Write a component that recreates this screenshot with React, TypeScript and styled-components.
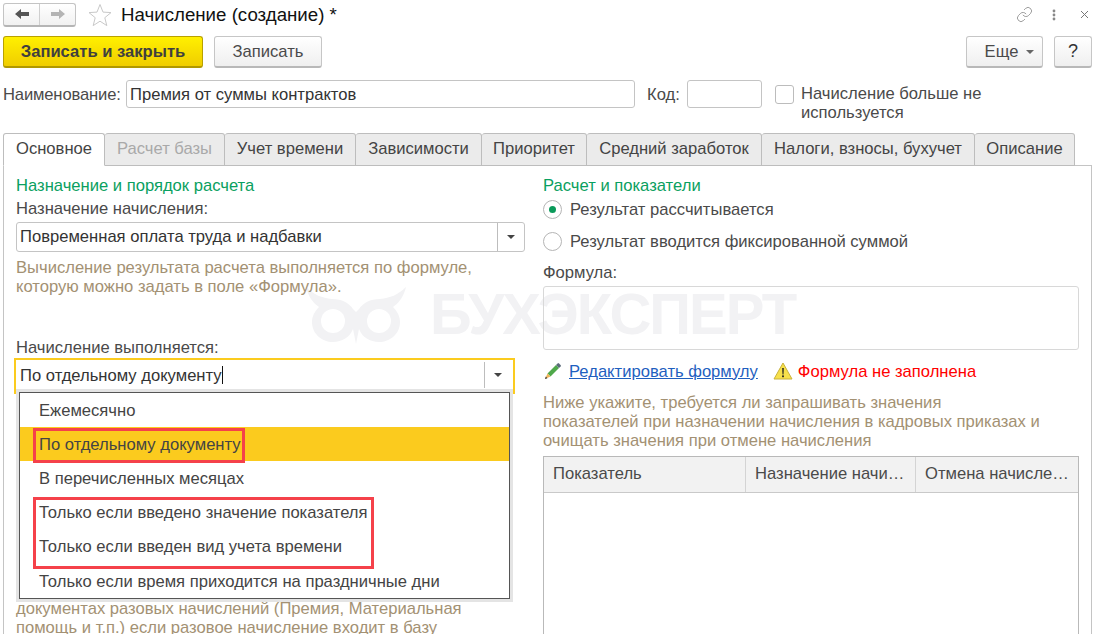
import React from "react";
import styled, { createGlobalStyle } from "styled-components";
import { Link } from "lucide-react";

const GlobalStyle = createGlobalStyle`
  html, body {
    margin: 0;
    padding: 0;
    background: #fff;
  }
  body {
    font-family: "Liberation Sans", Arial, sans-serif;
    font-size: 16.6px;
    color: #4a4a4a;
  }
`;

const tabs = [
  { label: "Основное", width: 102, active: true },
  { label: "Расчет базы", width: 120, disabled: true },
  { label: "Учет времени", width: 131 },
  { label: "Зависимости", width: 126 },
  { label: "Приоритет", width: 105 },
  { label: "Средний заработок", width: 175 },
  { label: "Налоги, взносы, бухучет", width: 213 },
  { label: "Описание", width: 100 },
];

const options = [
  "Ежемесячно",
  "По отдельному документу",
  "В перечисленных месяцах",
  "Только если введено значение показателя",
  "Только если введен вид учета времени",
  "Только если время приходится на праздничные дни",
];

export default function App() {
  return (
    <Page>
      <GlobalStyle />

      <TitleBar>
        <NavGroup>
          <NavButton>
            <svg width="16" height="12" viewBox="0 0 16 12">
              <path d="M1 6l6-5v3h8v4H7v3z" fill="#555" />
            </svg>
          </NavButton>
          <NavButton>
            <svg width="16" height="12" viewBox="0 0 16 12">
              <path d="M15 6L9 1v3H1v4h8v3z" fill="#b4b4b4" />
            </svg>
          </NavButton>
        </NavGroup>
        <StarIcon width="24" height="24" viewBox="0 0 24 24">
          <path
            d="M12 1.500l3 7.600 8 .5-6.200 5.100 2 7.900L12 18.200l-6.800 4.400 2-7.900L1 9.600l8-.5z"
            fill="none"
            stroke="#c9c9c9"
          />
        </StarIcon>
        <Title>Начисление (создание) *</Title>
        <WindowIcons>
          <Link size={17} strokeWidth={1} color="#777" />
          <svg width="4" height="12" viewBox="0 0 4 12">
            <circle cx="2" cy="2" r="1.400" fill="#888" />
            <circle cx="2" cy="6" r="1.400" fill="#888" />
            <circle cx="2" cy="10" r="1.400" fill="#888" />
          </svg>
          <svg width="9" height="9" viewBox="0 0 9 9">
            <path d="M1 1l7 7M8 1L1 8" stroke="#777" fill="none" />
          </svg>
        </WindowIcons>
      </TitleBar>

      <Toolbar>
        <PrimaryButton>Записать и закрыть</PrimaryButton>
        <Button $width={108}>Записать</Button>
        <PushRight />
        <MoreButton $width={77}>
          Еще <Caret />
        </MoreButton>
        <HelpButton $width={38}>?</HelpButton>
      </Toolbar>

      <NameRow>
        <FieldLabel>Наименование:</FieldLabel>
        <Input $width={509}>Премия от суммы контрактов</Input>
        <CodeLabel>Код:</CodeLabel>
        <Input $width={75} />
        <CheckBox />
        <CheckLabel>Начисление больше не используется</CheckLabel>
      </NameRow>

      <TabStrip>
        {tabs.map((t) => (
          <Tab key={t.label} $width={t.width} $active={t.active} $disabled={t.disabled}>
            {t.label}
          </Tab>
        ))}
      </TabStrip>

      <Panel>
        <Watermark>
          <svg width="104" height="62" viewBox="0 0 104 62">
            <path
              d="M2 4c8 8 16 11 26 12 10 0 17 4 21 10l3 3 3-3c4-6 11-10 21-10 10-1 18-4 26-12-2 9-7 16-13 20 5 5 7 10 7 15 0 12-10 20-21 20-9 0-17-5-20-13l-3 15-3-15c-3 8-11 13-20 13C18 59 8 51 8 39c0-5 2-10 7-15C9 20 4 13 2 4z"
              fill="#f2f2f4"
            />
            <circle cx="29" cy="38" r="12" fill="#fff" />
            <circle cx="75" cy="38" r="12" fill="#fff" />
          </svg>
          <WatermarkText>БУХЭКСПЕРТ</WatermarkText>
        </Watermark>

        <LeftColumn>
          <SectionTitle>Назначение и порядок расчета</SectionTitle>
          <Label>Назначение начисления:</Label>
          <Combo>
            <ComboValue>Повременная оплата труда и надбавки</ComboValue>
            <ComboArrow>
              <Caret $dark />
            </ComboArrow>
          </Combo>
          <Hint>
            Вычисление результата расчета выполняется по формуле,
            <br />
            которую можно задать в поле «Формула».
          </Hint>

          <SecondLabel>Начисление выполняется:</SecondLabel>
          <FocusWrap>
            <FocusCombo>
              <ComboValue>
                По отдельному документу
                <TextCursor />
              </ComboValue>
              <ComboArrow>
                <Caret $dark />
              </ComboArrow>
            </FocusCombo>
            <Popup>
              {options.map((o, i) => (
                <Option key={o} $selected={i === 1}>
                  {o}
                </Option>
              ))}
              <RedMark $top={35} $width={212} $height={35} />
              <RedMark $top={104} $width={341} $height={72} />
            </Popup>
          </FocusWrap>
          <BottomHint>
            документах разовых начислений (Премия, Материальная
            <br />
            помощь и т.п.) если разовое начисление входит в базу
          </BottomHint>
        </LeftColumn>

        <RightColumn>
          <SectionTitle>Расчет и показатели</SectionTitle>
          <RadioRow>
            <Radio $checked />
            Результат рассчитывается
          </RadioRow>
          <RadioRow>
            <Radio />
            Результат вводится фиксированной суммой
          </RadioRow>
          <FormulaLabel>Формула:</FormulaLabel>
          <FormulaBox />
          <LinkRow>
            <svg width="19" height="19" viewBox="0 0 19 19">
              <path d="M4.500 11.500L13 3l3 3-8.500 8.500z" fill="#4fa84a" />
              <path d="M13 3l1.600-1.600a1 1 0 0 1 1.400 0l1.600 1.600a1 1 0 0 1 0 1.400L16 6z" fill="#5c6b7a" />
              <path d="M4.500 11.500l3 3L2 17z" fill="#f0b45a" />
              <path d="M2 17l.8-2.400 1.600 1.600z" fill="#333" />
            </svg>
            <EditLink>Редактировать формулу</EditLink>
            <svg width="20" height="18" viewBox="0 0 20 18">
              <path d="M10 1l9 16H1z" fill="#f7e04b" stroke="#c9b23c" strokeLinejoin="round" />
              <path d="M9.200 6h1.600l-.3 6.500h-1z" fill="#222" />
              <rect x="9.100" y="13.400" width="1.800" height="1.800" fill="#222" />
            </svg>
            <WarningText>Формула не заполнена</WarningText>
          </LinkRow>
          <RightHint>
            Ниже укажите, требуется ли запрашивать значения
            <br />
            показателей при назначении начисления в кадровых приказах и
            <br />
            очищать значения при отмене начисления
          </RightHint>
          <Table>
            <HeaderRow>
              <HeaderCell>Показатель</HeaderCell>
              <HeaderCell>Назначение начи…</HeaderCell>
              <HeaderCell>Отмена начисле…</HeaderCell>
            </HeaderRow>
          </Table>
        </RightColumn>
      </Panel>
    </Page>
  );
}

const Page = styled.div`
  position: relative;
  width: 1094px;
  height: 634px;
  overflow: hidden;
  display: flex;
  flex-direction: column;
  padding: 2px 2px 0 3px;
  box-sizing: border-box;
  font-size: 16.6px;
  line-height: 19px;
  & > * {
    flex-shrink: 0;
  }
`;

const TitleBar = styled.div`
  display: flex;
  align-items: center;
  height: 25px;
`;

const NavGroup = styled.div`
  display: flex;
  width: 73px;
  height: 24px;
  box-sizing: border-box;
  border: 1px solid #c4c4c4;
  border-bottom: 2px solid #b5b5b5;
  border-radius: 3px;
  background: linear-gradient(#fff, #f1f1f1);
`;

const NavButton = styled.div`
  flex: 1;
  display: flex;
  align-items: center;
  justify-content: center;
  & + & {
    border-left: 1px solid #cfcfcf;
  }
`;

const StarIcon = styled.svg`
  margin-left: 12px;
`;

const Title = styled.div`
  margin-left: 9px;
  font-size: 18.7px;
  color: #111;
`;

const WindowIcons = styled.div`
  margin-left: auto;
  margin-right: 3px;
  display: flex;
  align-items: center;
  gap: 19px;
  & > :last-child {
    margin-left: 5px;
  }
`;

const Toolbar = styled.div`
  display: flex;
  margin-top: 9px;
  gap: 11px;
`;

const Button = styled.div<{ $width: number }>`
  width: ${(p) => p.$width}px;
  height: 32px;
  box-sizing: border-box;
  display: flex;
  align-items: center;
  justify-content: center;
  gap: 6px;
  border: 1px solid #c6c6c6;
  border-bottom: 2px solid #b8b8b8;
  border-radius: 3px;
  background: linear-gradient(#fff, #efefef);
  color: #4a4a4a;
`;

const MoreButton = styled(Button)`
  padding-left: 10px;
  gap: 8px;
`;

const HelpButton = styled(Button)`
  font-size: 18px;
  color: #333;
`;

const PrimaryButton = styled.div`
  width: 200px;
  height: 32px;
  box-sizing: border-box;
  display: flex;
  align-items: center;
  justify-content: center;
  border: 1px solid #b9a100;
  border-bottom: 2px solid #b09800;
  border-radius: 3px;
  background: linear-gradient(#fff000, #f0cd00);
  font-weight: bold;
  color: #3f3f3f;
`;

const PushRight = styled.div`
  flex: 1;
`;

const Caret = styled.span<{ $dark?: boolean }>`
  display: inline-block;
  width: 0;
  height: 0;
  border-left: 4px solid transparent;
  border-right: 4px solid transparent;
  border-top: 4px solid ${(p) => (p.$dark ? "#444" : "#666")};
`;

const NameRow = styled.div`
  display: flex;
  align-items: center;
  margin-top: 12px;
  height: 28px;
`;

const FieldLabel = styled.div`
  width: 123px;
  white-space: nowrap;
  letter-spacing: -0.15px;
`;

const Input = styled.div<{ $width: number }>`
  width: ${(p) => p.$width}px;
  height: 28px;
  box-sizing: border-box;
  border: 1px solid #c4c4c4;
  border-radius: 3px;
  padding: 4px 3px;
  color: #333;
  background: #fff;
  white-space: nowrap;
`;

const CodeLabel = styled.div`
  margin-left: 12px;
  width: 40px;
`;

const CheckBox = styled.div`
  margin-left: 13px;
  width: 19px;
  height: 19px;
  box-sizing: border-box;
  border: 1px solid #bcbcbc;
  border-radius: 3px;
`;

const CheckLabel = styled.div`
  align-self: flex-start;
  margin: 4px 0 0 7px;
  width: 215px;
`;

const TabStrip = styled.div`
  display: flex;
  margin-top: 25px;
  height: 33px;
  position: relative;
  z-index: 1;
`;

const Tab = styled.div<{ $width: number; $active?: boolean; $disabled?: boolean }>`
  width: ${(p) => p.$width}px;
  box-sizing: border-box;
  display: flex;
  align-items: center;
  justify-content: center;
  padding-bottom: 2px;
  border: 1px solid #bdbdbd;
  border-left-width: ${(p) => (p.$active ? 1 : 0)}px;
  border-bottom-color: ${(p) => (p.$active ? "#fff" : "#bdbdbd")};
  border-radius: 3px 3px 0 0;
  background: ${(p) => (p.$active ? "#fff" : "#ebebeb")};
  color: ${(p) => (p.$disabled ? "#a9a9a9" : "#444")};
  white-space: nowrap;
`;

const Panel = styled.div`
  position: relative;
  height: 480px;
  margin-top: -1px;
  display: grid;
  grid-template-columns: 527px 536px;
  box-sizing: border-box;
  border: 1px solid #c4c4c4;
  border-bottom: 0;
  width: 1089px;
  padding-left: 12px;
`;

const Watermark = styled.div`
  position: absolute;
  left: 300px;
  top: 117px;
  display: flex;
  align-items: center;
  gap: 22px;
  pointer-events: none;
`;

const WatermarkText = styled.div`
  font-size: 58px;
  line-height: 62px;
  font-weight: bold;
  color: #f2f2f4;
  letter-spacing: -2px;
`;

const LeftColumn = styled.div`
  position: relative;
  min-width: 0;
`;

const RightColumn = styled.div`
  position: relative;
  min-width: 0;
`;

const SectionTitle = styled.div`
  margin-top: 10px;
  color: #0aa060;
`;

const Label = styled.div`
  margin-top: 4px;
`;

const Combo = styled.div`
  display: flex;
  width: 509px;
  height: 30px;
  margin-top: 4px;
  box-sizing: border-box;
  border: 1px solid #c4c4c4;
  border-radius: 3px;
  background: #fff;
`;

const ComboValue = styled.div`
  flex: 1;
  display: flex;
  align-items: center;
  padding: 0 0 2px 3px;
  color: #333;
`;

const ComboArrow = styled.div`
  width: 26px;
  display: flex;
  align-items: center;
  justify-content: center;
  border-left: 1px solid #bdbdbd;
`;

const Hint = styled.div`
  margin-top: 6px;
  color: #a39173;
  white-space: nowrap;
`;

const SecondLabel = styled(Label)`
  margin-top: 42px;
`;

const FocusWrap = styled.div`
  position: relative;
  width: 501px;
  margin: 1px 0 0 -2px;
`;

const FocusCombo = styled(Combo)`
  width: 501px;
  height: 36px;
  margin: 0;
  padding: 2px 2px 4px 3px;
  border: 2px solid #fbcb1e;
  border-radius: 0;
  & > div:first-child {
    padding: 0 0 0 1px;
  }
`;

const TextCursor = styled.span`
  display: inline-block;
  width: 1px;
  height: 18px;
  background: #111;
`;

const Popup = styled.div`
  position: absolute;
  left: 5px;
  top: 34px;
  width: 491px;
  box-sizing: border-box;
  border: 1px solid #555;
  box-shadow: 0 0 0 3px #e4e4e4;
  background: #fff;
  z-index: 2;
`;

const Option = styled.div<{ $selected?: boolean }>`
  height: 34.2px;
  display: flex;
  align-items: center;
  padding-left: 19px;
  background: ${(p) => (p.$selected ? "#fbcb1e" : "transparent")};
  color: #444;
  white-space: nowrap;
`;

const RedMark = styled.div<{ $top: number; $width: number; $height: number }>`
  position: absolute;
  left: 13px;
  top: ${(p) => p.$top}px;
  width: ${(p) => p.$width}px;
  height: ${(p) => p.$height}px;
  box-sizing: border-box;
  border: 3px solid #f5414a;
`;

const BottomHint = styled(Hint)`
  margin-top: 205px;
`;

const RadioRow = styled.div`
  display: flex;
  align-items: center;
  gap: 8px;
  height: 32px;
  margin-top: -2px;
  margin-bottom: 2px;
`;

const Radio = styled.span<{ $checked?: boolean }>`
  width: 19px;
  height: 19px;
  box-sizing: border-box;
  display: flex;
  align-items: center;
  justify-content: center;
  border: 1px solid #b5b5b5;
  border-radius: 50%;
  background: #fff;
  &::after {
    content: "";
    width: 7px;
    height: 7px;
    border-radius: 50%;
    background: ${(p) => (p.$checked ? "#0a9a5a" : "transparent")};
  }
`;

const FormulaLabel = styled.div`
  margin-top: 6px;
`;

const FormulaBox = styled.div`
  margin-top: 4px;
  width: 536px;
  height: 64px;
  box-sizing: border-box;
  border: 1px solid #d8d8d8;
  border-radius: 3px;
`;

const LinkRow = styled.div`
  display: flex;
  align-items: center;
  margin-top: 11px;
  height: 20px;
  gap: 6px;
`;

const EditLink = styled.a`
  color: #1f5fbf;
  text-decoration: underline;
  margin: 0 9px 0 1px;
`;

const WarningText = styled.span`
  color: #f00;
  margin-left: -1px;
`;

const RightHint = styled(Hint)`
  margin-top: 12px;
`;

const Table = styled.div`
  margin-top: 6px;
  width: 536px;
  height: 190px;
  box-sizing: border-box;
  border: 1px solid #b9b9b9;
`;

const HeaderRow = styled.div`
  display: grid;
  grid-template-columns: 201px 170px 163px;
  height: 35px;
  border-bottom: 1px solid #c9c9c9;
  background: #f2f2f2;
`;

const HeaderCell = styled.div`
  padding: 0 8px 0 9px;
  line-height: 34px;
  min-width: 0;
  white-space: nowrap;
  & + & {
    border-left: 1px solid #d4d4d4;
  }
`;
